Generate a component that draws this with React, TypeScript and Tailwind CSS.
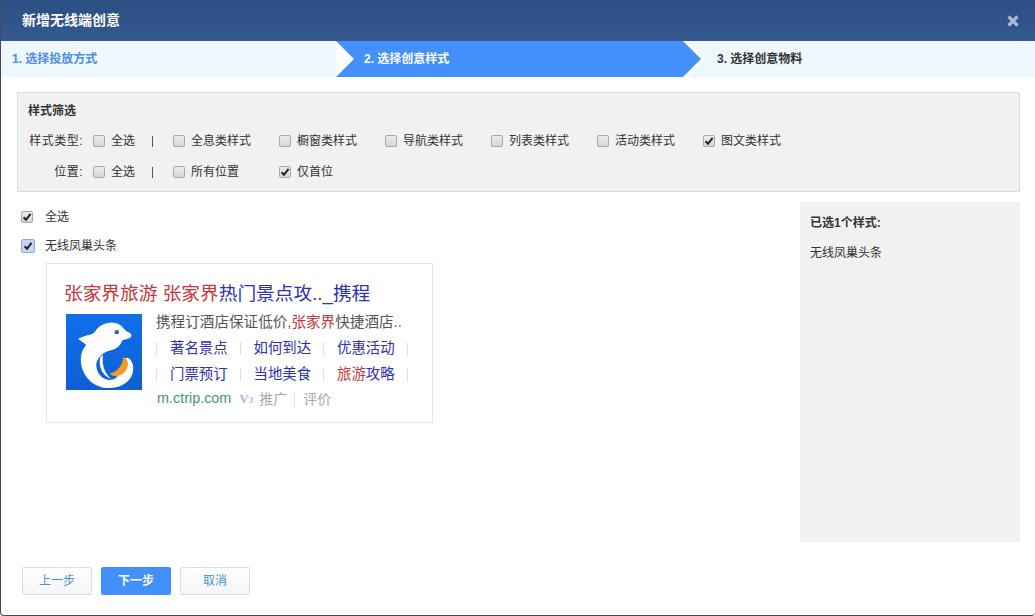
const cjk = "font-['Liberation_Sans','Noto_Sans_CJK_SC',sans-serif]";

function Box({ checked, focus }: { checked?: boolean; focus?: boolean }) {
  return (
    <span
      className={
        focus
          ? "flex h-[14px] w-[14px] shrink-0 items-center justify-center rounded-[2px] border border-[#8fa8dc] bg-[#c6d4f1]"
          : "flex h-[12px] w-[12px] shrink-0 items-center justify-center rounded-[2px] border border-[#a9a9a9] bg-gradient-to-b from-[#ececec] to-[#d6d6d6]"
      }
    >
      {checked && (
        <svg width="10" height="10" viewBox="0 0 10 10">
          <path d="M1.6 5.2 L4 7.8 L8.6 1.8" fill="none" stroke="#222" strokeWidth="2" />
        </svg>
      )}
    </span>
  );
}

function Opt({ label, checked, className }: { label: string; checked?: boolean; className: string }) {
  return (
    <div className={`flex items-center gap-[6px] ${className}`}>
      <Box checked={checked} />
      <span>{label}</span>
    </div>
  );
}

function Logo() {
  return (
    <svg width="76" height="76" viewBox="0 0 226 226" className="shrink-0">
      <defs>
        <linearGradient id="sky" x1="0" y1="0" x2="0" y2="1">
          <stop offset="0" stopColor="#1170e8" />
          <stop offset="1" stopColor="#0f5ed6" />
        </linearGradient>
      </defs>
      <rect width="226" height="226" fill="url(#sky)" />
      <path
        d="M36 74 C55 62 75 64 85 54 C100 30 128 20 152 28 C167 34 174 46 180 52 C190 54 196 60 194 67 C188 76 172 74 166 80 C163 92 152 102 138 106 C112 112 92 128 90 150 C90 176 108 196 132 196 C152 196 166 176 170 140 C176 122 194 130 199 152 C206 192 172 222 125 220 C78 219 44 180 44 135 C44 116 52 102 60 92 C54 86 45 80 36 74Z"
        fill="#fff"
      />
      <path d="M102 128 C95 155 108 184 134 193 C116 176 106 155 110 122Z" fill="#fff" />
      <path d="M170 128 C170 152 152 172 130 178 C142 190 166 186 178 168 C187 154 188 134 170 128Z" fill="#f39a1f" />
      <circle cx="151" cy="54" r="6.5" fill="#2a63b8" />
    </svg>
  );
}

function LinkRow({ items }: { items: React.ReactNode[] }) {
  return (
    <div className="flex h-[26px] items-center text-[14.4px] text-[#2f2fb8]">
      {items.map((t, i) => (
        <div key={i} className="flex w-[83.5px] items-center">
          <span className="h-[13px] w-px bg-[#dedede]" />
          <span className="ml-[13px] whitespace-nowrap">{t}</span>
        </div>
      ))}
      <span className="h-[13px] w-px bg-[#dedede]" />
    </div>
  );
}

export default function App() {
  return (
    <div className={`h-[616px] w-[1035px] overflow-hidden rounded-b-[4px] border-b border-l border-[#3d4a60] bg-white text-[12px] text-[#333] ${cjk}`}>
      <div className="flex h-[41px] items-center justify-between bg-gradient-to-b from-[#2b4f83] to-[#35598f] pl-[21px] pr-[15px]">
        <span className="text-[14px] font-bold text-white">新增无线端创意</span>
        <svg width="14" height="14" viewBox="0 0 14 14">
          <path d="M2.5 2.5 L11.5 11.5 M11.5 2.5 L2.5 11.5" stroke="#a9bbd2" strokeWidth="3.2" />
        </svg>
      </div>

      <div className="flex h-[36px] bg-[#eff7ff] font-bold">
        <div className="flex w-[335px] items-center pl-[11px] text-[#4a90e6]">1. 选择投放方式</div>
        <div className="h-full w-[369px] bg-white [clip-path:polygon(0_0,351px_0,369px_50%,351px_100%,0_100%)]">
          <div className="flex h-full w-[365px] items-center bg-[#4390fb] pl-[28px] text-white [clip-path:polygon(0_0,347px_0,365px_50%,347px_100%,0_100%,18px_50%)]">
            2. 选择创意样式
          </div>
        </div>
        <div className="flex items-center pl-[12px] text-[#333]">3. 选择创意物料</div>
      </div>

      <div className="ml-[16px] mt-[15px] h-[100px] w-[1003px] border border-[#dcdcdc] bg-[#f1f1f1] pl-[10px]">
        <div className="pt-[10px] font-bold leading-[16px]">样式筛选</div>
        <div className="mt-[14px] flex h-[16px] items-center whitespace-nowrap">
          <span className="w-[55px] text-right tracking-[0.5px]">样式类型:</span>
          <Opt label="全选" className="ml-[10px] w-[59px]" />
          <span className="mr-[20px] h-[11px] w-px bg-[#555]" />
          <Opt label="全息类样式" className="w-[106px]" />
          <Opt label="橱窗类样式" className="w-[106px]" />
          <Opt label="导航类样式" className="w-[106px]" />
          <Opt label="列表类样式" className="w-[106px]" />
          <Opt label="活动类样式" className="w-[106px]" />
          <Opt label="图文类样式" checked className="w-[106px]" />
        </div>
        <div className="mt-[15px] flex h-[16px] items-center whitespace-nowrap">
          <span className="w-[55px] text-right tracking-[0.5px]">位置:</span>
          <Opt label="全选" className="ml-[10px] w-[59px]" />
          <span className="mr-[20px] h-[11px] w-px bg-[#555]" />
          <Opt label="所有位置" className="w-[106px]" />
          <Opt label="仅首位" checked className="w-[106px]" />
        </div>
      </div>

      <div className="mt-[10px] flex pl-[20px]">
        <div className="flex-1">
          <div className="mt-[7px] flex h-[16px] items-center">
            <Box checked />
            <span className="ml-[12px]">全选</span>
          </div>
          <div className="mt-[13px] flex h-[16px] items-center">
            <Box checked focus />
            <span className="ml-[10px]">无线凤巢头条</span>
          </div>
          <div className="ml-[25px] mt-[9px] h-[160px] w-[387px] border border-[#e6e6e6] pl-[17px] pt-[17px]">
            <div className="whitespace-nowrap text-[18.7px] leading-[26px] text-[#2f2fb8]">
              <span className="text-[#c9353a]">张家界旅游 张家界</span>热门景点攻.._携程
            </div>
            <div className="mt-[6px] flex">
              <div className="ml-[2px] mt-[1px]">
                <Logo />
              </div>
              <div className="ml-[14px] mt-[1px]">
                <div className="flex h-[18px] items-center whitespace-nowrap text-[14.6px] text-[#555]">
                  携程订酒店保证低价,<span className="text-[#c9353a]">张家界</span>快捷酒店..
                </div>
                <div className="mt-[4px]">
                  <LinkRow items={["著名景点", "如何到达", "优惠活动"]} />
                  <LinkRow items={["门票预订", "当地美食", <><span className="text-[#c9353a]">旅游</span>攻略</>]} />
                </div>
                <div className="mt-[1px] flex h-[20px] items-center whitespace-nowrap pl-px text-[14px]">
                  <span className="text-[14.4px] text-[#3f9a66]">m.ctrip.com</span>
                  <span className="ml-[8px] w-[20px] font-['Liberation_Serif',serif] text-[13px] font-bold text-[#9dbbe8]">
                    V<span className="text-[9px]">3</span>
                  </span>
                  <span className="text-[#a8a8a8]">推广</span>
                  <span className="ml-[7px] mr-[8px] h-[13px] w-px bg-[#e2e2e2]" />
                  <span className="text-[#a8a8a8]">评价</span>
                </div>
              </div>
            </div>
          </div>
        </div>
        <div className="mr-[15px] h-[340px] w-[220px] bg-[#f1f1f1] pl-[10px] pt-[13px]">
          <div className="font-bold leading-[16px]">已选1个样式:</div>
          <div className="mt-[14px] leading-[16px]">无线凤巢头条</div>
        </div>
      </div>

      <div className="ml-[21px] mt-[25px] flex gap-[9px]">
        <button className="h-[28px] w-[70px] rounded-[2px] border border-[#dcdcdc] bg-gradient-to-b from-white to-[#f5f5f5] text-[#4a90d9]">上一步</button>
        <button className="h-[28px] w-[70px] rounded-[2px] bg-[#4390fb] font-bold text-white">下一步</button>
        <button className="h-[28px] w-[70px] rounded-[2px] border border-[#dcdcdc] bg-gradient-to-b from-white to-[#f5f5f5] text-[#4a90d9]">取消</button>
      </div>
    </div>
  );
}
